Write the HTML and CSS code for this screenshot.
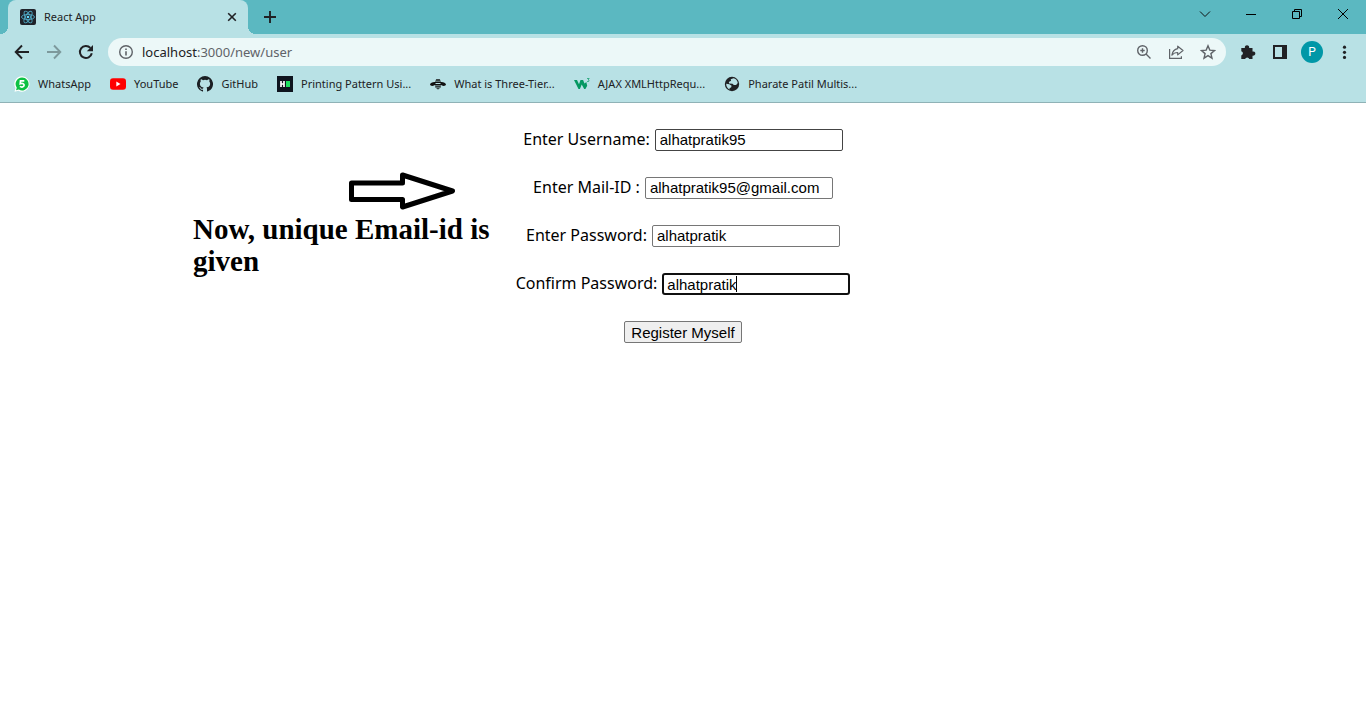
FILE: index.html
```html
<!DOCTYPE html>
<html lang="en">
<head>
<meta charset="utf-8">
<title>React App</title>
<link rel="stylesheet" href="styles.css">
</head>
<body>
<header class="browser">
  <div class="tabstrip">
    <div class="tab">
      <svg class="favicon" viewBox="0 0 16 16" width="16" height="16"><rect width="16" height="16" rx="2" fill="#20232a"/><g fill="none" stroke="#4fa9c4" stroke-width="0.9"><ellipse cx="8" cy="8" rx="6.5" ry="2.6"/><ellipse cx="8" cy="8" rx="6.5" ry="2.6" transform="rotate(60 8 8)"/><ellipse cx="8" cy="8" rx="6.5" ry="2.6" transform="rotate(120 8 8)"/></g><circle cx="8" cy="8" r="1.3" fill="#61dafb"/></svg>
      <span class="tab-title">React App</span>
      <button class="icon-btn tab-close" aria-label="Close tab"><svg viewBox="0 0 16 16" width="16" height="16"><path d="M4.2 4.2l7.6 7.6M11.8 4.2l-7.6 7.6" stroke="#202124" stroke-width="1.6"/></svg></button>
    </div>
    <button class="icon-btn new-tab" aria-label="New tab"><svg viewBox="0 0 16 16" width="16" height="16"><path d="M8 2v12M2 8h12" stroke="#202124" stroke-width="1.9"/></svg></button>
    <div class="window-controls">
      <button class="icon-btn" aria-label="Search tabs"><svg viewBox="0 0 16 16" width="16" height="16"><path d="M3 5.500l5 5 5-5" fill="none" stroke="#111" stroke-width="1"/></svg></button>
      <button class="icon-btn" aria-label="Minimize"><svg viewBox="0 0 16 16" width="16" height="16"><path d="M3 8.500h10" stroke="#000"/></svg></button>
      <button class="icon-btn" aria-label="Restore"><svg viewBox="0 0 16 16" width="16" height="16"><path d="M3.500 5.500h7v7h-7zM5.500 5.500v-2h7v7h-2" fill="none" stroke="#000"/></svg></button>
      <button class="icon-btn" aria-label="Close"><svg viewBox="0 0 16 16" width="16" height="16"><path d="M3 3l10 10M13 3L3 13" stroke="#000" stroke-width="1"/></svg></button>
    </div>
  </div>

  <div class="toolbar">
    <nav class="history">
      <button class="icon-btn" aria-label="Back"><svg viewBox="0 0 16 16" width="16" height="16"><path d="M15 8H2M8 1.500L1.700 8 8 14.500" fill="none" stroke="#202124" stroke-width="1.900"/></svg></button>
      <button class="icon-btn" aria-label="Forward"><svg viewBox="0 0 16 16" width="16" height="16"><path d="M1 8h13M8 1.500L14.300 8 8 14.500" fill="none" stroke="#7d999c" stroke-width="1.900"/></svg></button>
      <button class="icon-btn" aria-label="Reload"><svg viewBox="0 0 16 16" width="16" height="16"><path d="M13.800 9.200A6 6 0 1 1 12.400 3.900" fill="none" stroke="#202124" stroke-width="2"/><path d="M15 1v6.200H8.800z" fill="#202124"/></svg></button>
    </nav>
    <div class="omnibox">
      <svg viewBox="0 0 16 16" width="16" height="16"><circle cx="8" cy="8" r="6.300" fill="none" stroke="#5f6368" stroke-width="1.400"/><path d="M8 7.200v4.300M8 4.500v1.600" stroke="#5f6368" stroke-width="1.600"/></svg>
      <span class="url"><span class="host">localhost</span>:3000/new/user</span>
      <button class="icon-btn" aria-label="Zoom"><svg viewBox="0 0 16 16" width="16" height="16"><g fill="none" stroke="#5f6368" stroke-width="1.400"><circle cx="6.500" cy="6.500" r="4.800"/><path d="M10 10l4.500 4.500M6.500 4.300v4.400M4.300 6.500h4.400"/></g></svg></button>
      <button class="icon-btn" aria-label="Share"><svg viewBox="0 0 16 16" width="16" height="16"><g fill="none" stroke="#5f6368" stroke-width="1.200"><path d="M1.600 5v9.400h11.800v-2.200"/><path d="M9.700 2.200L15 6.500l-5.300 4.400V8.500c-2.600 0-4.300.8-5.800 2.700.5-3.300 2.300-5.900 5.800-6.500z" stroke-linejoin="round"/></g></svg></button>
      <button class="icon-btn" aria-label="Bookmark"><svg viewBox="0 0 16 16" width="16" height="16"><path d="M8 1.800l1.800 4.300 4.700.4-3.600 3.100 1.100 4.600L8 11.700l-4 2.500 1.100-4.600L1.500 6.500l4.700-.4z" fill="none" stroke="#5f6368" stroke-width="1.400"/></svg></button>
    </div>
    <div class="actions">
      <button class="icon-btn" aria-label="Extensions"><svg viewBox="0 0 16 16" width="16" height="16"><path d="M1.300 4h3.600a2.200 2.200 0 1 1 4.200 0H12.500v3.500a2.200 2.200 0 1 1 0 4.200V15H9.300a2.200 2.200 0 0 0-4.200 0H1.300v-3.600a2.100 2.100 0 0 0 0-4.100z" fill="#202124"/></svg></button>
      <button class="icon-btn" aria-label="Side panel"><svg viewBox="0 0 16 16" width="16" height="16"><path d="M1 1h14v14H1zM3 3v10h7V3z" fill="#202124" fill-rule="evenodd"/></svg></button>
      <button class="avatar" aria-label="Profile">P</button>
      <button class="icon-btn" aria-label="Menu"><svg viewBox="0 0 16 16" width="16" height="16"><g fill="#202124"><circle cx="8.500" cy="3.200" r="1.600"/><circle cx="8.500" cy="8.300" r="1.600"/><circle cx="8.500" cy="13.400" r="1.600"/></g></svg></button>
    </div>
  </div>

  <nav class="bookmarks">
    <a href="#"><svg viewBox="0 0 16 16" width="16" height="16"><path d="M8 .2a7.700 7.700 0 1 1-3.600 14.600L.5 15.800l1-3.800A7.700 7.700 0 0 1 8 .2z" fill="#fff"/><path d="M8 1.500a6.500 6.500 0 1 1-3.200 12.100L2 14.300l.8-2.600A6.500 6.500 0 0 1 8 1.500z" fill="#0cc143"/><path d="M10.300 4.800H6.500l-.3 3c2.600-.9 4 0 3.900 1.500-.1 1.700-2.500 2.300-4.200 1.100" fill="none" stroke="#fff" stroke-width="1.700"/></svg><span>WhatsApp</span></a>
    <a href="#"><svg viewBox="0 0 16 16" width="16" height="16"><rect y="2.300" width="16" height="11.500" rx="3" fill="#f00"/><path d="M6.300 5.600v4.800L10.500 8z" fill="#fff"/></svg><span>YouTube</span></a>
    <a href="#"><svg viewBox="0 0 16 16" width="16" height="16"><path fill="#1b1f23" d="M8 0a8 8 0 0 0-2.530 15.590c.4.070.55-.17.550-.38v-1.490c-2.230.48-2.690-.95-2.690-.95-.36-.92-.89-1.170-.89-1.170-.73-.5.050-.49.050-.49.800.060 1.230.830 1.230.830.710 1.220 1.870.870 2.330.660.070-.52.280-.870.510-1.070-1.780-.2-3.640-.89-3.640-3.950 0-.87.310-1.590.820-2.150-.08-.2-.36-1.020.080-2.120 0 0 .670-.21 2.200.820a7.600 7.600 0 0 1 4 0c1.530-1.040 2.200-.82 2.200-.82.440 1.100.160 1.920.080 2.120.510.560.820 1.270.820 2.150 0 3.070-1.870 3.750-3.650 3.950.290.250.540.730.540 1.480v2.200c0 .210.150.460.550.380A8 8 0 0 0 8 0z"/></svg><span>GitHub</span></a>
    <a href="#"><svg viewBox="0 0 16 16" width="16" height="16"><rect width="16" height="16" fill="#0e141e"/><path d="M4 5v6M7 5v6M4 8h3" stroke="#fff" stroke-width="1.700"/><path d="M9 5h4v6H9z" fill="#1ee05f"/></svg><span>Printing Pattern Usi...</span></a>
    <a href="#"><svg viewBox="0 0 16 16" width="16" height="16"><g fill="#111"><path d="M5.500 6.200C3 5.800.3 7 0 8.500c.2 1.900 4 1.900 5.500 0zM10.500 6.200C13 5.800 15.700 7 16 8.500c-.2 1.900-4 1.900-5.500 0z"/><path d="M6.200 3.200h3.600l.8 1.600H5.400zM5 5.600h6v1.500H5zM5 8h6v1.400H5zM5.200 10.200h5.600v1.200H5.200zM6 12.200h4l-2 1.200z"/></g></svg><span>What is Three-Tier...</span></a>
    <a href="#"><svg viewBox="0 0 16 16" width="16" height="16"><path d="M0 4h3l2 4.200L6.500 4h2.600l1.400 3.600L12.300 6l.9 3.800-1.800 3.200h-1.200L7.700 8.500 5.900 13H4.500z" fill="#059862"/><path d="M13 2.500h2.200l-1 1.400c1.600.3 1.200 2.200-1.200 1.500" fill="none" stroke="#059862" stroke-width=".7"/></svg><span>AJAX XMLHttpRequ...</span></a>
    <a href="#"><svg viewBox="0 0 16 16" width="16" height="16"><circle cx="8" cy="8" r="7.200" fill="#202124"/><path d="M9.400 2.200l-2.700 1 .4 1.500-2.300 1.200.4 1.700 3.300.1 1.300 1.200h2.300l1.700-2A5.800 5.800 0 0 0 9.400 2.200zM2.200 7.800l3.200.4 2.200 1.600-.5 1.700-1.500.4v1.500A5.900 5.900 0 0 1 2.200 7.800z" fill="#b8e1e5"/></svg><span>Pharate Patil Multis...</span></a>
  </nav>
</header>

<main class="page">
  <form class="register">
    <div class="field"><label for="user">Enter Username:</label><input class="hovered" id="user" type="text" value="alhatpratik95"></div>
    <div class="field"><label for="mail">Enter Mail-ID :</label><input id="mail" type="text" value="alhatpratik95@gmail.com"></div>
    <div class="field"><label for="pass">Enter Password:</label><input id="pass" type="text" value="alhatpratik"></div>
    <div class="field"><label for="confirm">Confirm Password:</label><span class="active-box"><input id="confirm" type="text" value="alhatpratik"><span class="caret"></span></span></div>
    <button class="submit" type="button">Register Myself</button>
  </form>
  <aside class="note">
    <svg class="arrow" viewBox="0 0 108 38" width="108" height="38"><path d="M3.500 11h51V3l50 16-50 16v-7.500h-51z" fill="none" stroke="#000" stroke-width="5" stroke-linejoin="round"/></svg>
    <p>Now, unique Email-id is given</p>
  </aside>
</main>
</body>
</html>
```

FILE: styles.css
```css
* { box-sizing: border-box; }

body {
  margin: 0;
  background: #fff;
  color: #000;
  font-family: "Noto Sans", "Open Sans", sans-serif;
}

svg { display: block; flex: none; }

.icon-btn {
  padding: 0;
  border: 0;
  background: none;
}

.browser {
  background: #b8e1e5;
  border-bottom: 1px solid #8fb2b6;
  color: #202124;
}

.tabstrip {
  display: flex;
  align-items: center;
  height: 34px;
  padding-left: 8px;
  background: #5bb8c1;
}

.tab {
  position: relative;
  display: flex;
  align-items: center;
  gap: 8px;
  width: 240px;
  height: 34px;
  padding: 0 8px 0 12px;
  border-radius: 8px 8px 0 0;
  background: #b8e1e5;
  font-size: 11px;
}

.tab::before,
.tab::after {
  content: "";
  position: absolute;
  bottom: 0;
  width: 8px;
  height: 8px;
}

.tab::before {
  right: 100%;
  background: radial-gradient(circle at 0 0, #5bb8c1 8px, #b8e1e5 8px);
}

.tab::after {
  left: 100%;
  background: radial-gradient(circle at 100% 0, #5bb8c1 8px, #b8e1e5 8px);
}

.tab-title {
  flex: 1;
  padding-bottom: 2px;
}

.new-tab { margin-left: 14px; }

.window-controls {
  display: flex;
  gap: 30px;
  margin-left: auto;
  padding: 0 15px 6px 0;
}

.toolbar {
  display: flex;
  align-items: center;
  height: 36px;
  padding: 0 14px;
}

.history {
  display: flex;
  gap: 16px;
  margin-right: 14px;
}

.omnibox {
  display: flex;
  flex: 1;
  align-items: center;
  gap: 16px;
  height: 28px;
  padding: 0 10px;
  border-radius: 14px;
  background: #ecf8f8;
}

.url {
  flex: 1;
  margin-left: -8px;
  color: #5f6368;
  font-size: 13px;
}

.host { color: #202124; }

.actions {
  display: flex;
  align-items: center;
  gap: 13px;
  margin-left: 14px;
}

.actions .icon-btn + .icon-btn { margin-left: 3px; }

.avatar {
  width: 22px;
  height: 22px;
  padding: 0 0 1px;
  border: 0;
  border-radius: 50%;
  background: #0097a7;
  color: #fff;
  font: 12px Roboto, sans-serif;
}

.bookmarks {
  display: flex;
  gap: 19px;
  height: 32px;
  padding: 0 14px 4px;
}

.bookmarks a {
  display: flex;
  align-items: center;
  gap: 8px;
  color: #202124;
  font-size: 11px;
  text-decoration: none;
  white-space: nowrap;
}

.bookmarks span { padding-bottom: 2px; }

.page { position: relative; }

.register {
  display: flex;
  flex-direction: column;
  align-items: center;
  gap: 26px;
  padding-top: 26px;
}

.field {
  display: flex;
  align-items: center;
  gap: 5px;
  height: 22px;
}

.field label {
  padding-bottom: 2px;
  font-size: 16px;
  line-height: 20px;
}

.field input {
  display: block;
  width: 188px;
  height: 22px;
  padding: 0 4px 2px;
  border: 1px solid #767676;
  border-radius: 2px;
  background: #fff;
  color: #000;
  font: 15px "Liberation Sans", Arial, sans-serif;
}

.field .hovered { border-color: #444; }

.active-box { position: relative; }

.field .active-box input {
  padding: 0 3px;
  border: 2px solid #101010;
  border-radius: 3px;
}

.caret {
  position: absolute;
  top: 3px;
  left: 74px;
  width: 1px;
  height: 16px;
  background: #000;
}

.submit {
  height: 22px;
  padding: 0 6px;
  border: 1px solid #767676;
  border-radius: 2px;
  background: #efefef;
  color: #000;
  font: 15px "Liberation Sans", Arial, sans-serif;
}

.note {
  position: absolute;
  top: 69px;
  left: 193px;
  width: 310px;
}

.arrow { margin-left: 155px; }

.note p {
  margin: 3px 0 0;
  font: bold 29px/32px "Liberation Serif", "Times New Roman", serif;
}
```
